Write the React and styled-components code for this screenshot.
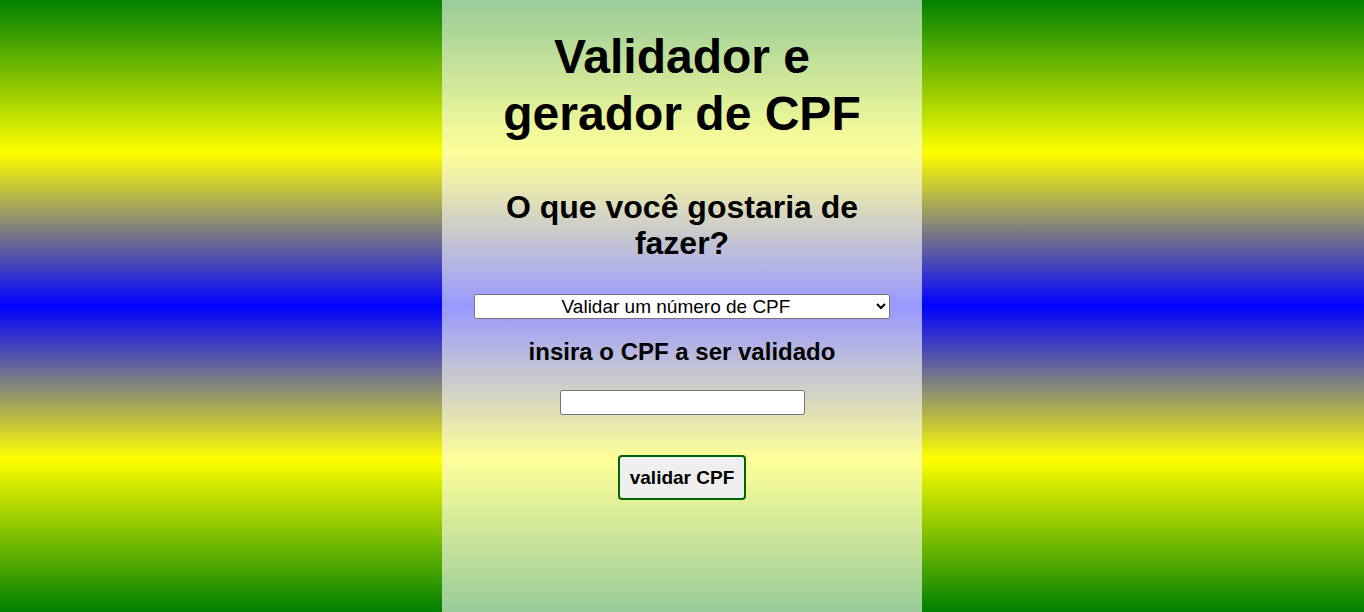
import React, { useState } from "react";
import styled, { createGlobalStyle } from "styled-components";

const GlobalStyle = createGlobalStyle`
  html, body {
    margin: 0;
    padding: 0;
  }
  body {
    font-family: "Liberation Sans", Arial, sans-serif;
  }
`;

const Page = styled.div`
  min-height: 100vh;
  background: linear-gradient(green, yellow, blue, yellow, green);
  display: flex;
  justify-content: center;
`;

const Panel = styled.main`
  width: 480px;
  min-height: 100vh;
  box-sizing: border-box;
  padding: 0 30px;
  background-color: rgba(255, 255, 255, 0.6);
  display: flex;
  flex-direction: column;
  align-items: center;
  text-align: center;
`;

const Title = styled.h1`
  font-size: 48px;
  line-height: 57px;
  font-weight: bold;
  margin: 28px 0 0;
  width: 380px;
`;

const Question = styled.h2`
  font-size: 32px;
  line-height: 36px;
  font-weight: bold;
  margin: 47px 0 0;
`;

const Select = styled.select`
  width: 416px;
  height: 25px;
  margin-top: 33px;
  font-family: "Liberation Sans", Arial, sans-serif;
  font-size: 19px;
  text-align: center;
  text-align-last: center;
  background: white;
  border: 1px solid #767676;
  border-radius: 2px;
`;

const Label = styled.h3`
  font-size: 24px;
  line-height: 28px;
  font-weight: bold;
  margin: 19px 0 0;
`;

const Input = styled.input`
  width: 245px;
  height: 25px;
  box-sizing: border-box;
  margin-top: 24px;
  border: 1px solid #767676;
  border-radius: 2px;
  background: white;
`;

const Button = styled.button`
  margin-top: 40px;
  padding: 0 10px;
  height: 45px;
  font-family: "Liberation Sans", Arial, sans-serif;
  font-size: 19px;
  font-weight: bold;
  color: black;
  background-color: #efefef;
  border: 2px solid darkgreen;
  border-radius: 4px;
  cursor: pointer;
`;

export default function App() {
  const [mode, setMode] = useState("validar");
  const [cpf, setCpf] = useState("");

  return (
    <>
      <GlobalStyle />
      <Page>
        <Panel>
          <Title>Validador e gerador de CPF</Title>
          <Question>O que você gostaria de fazer?</Question>
          <Select value={mode} onChange={e => setMode(e.target.value)}>
            <option value="validar">Validar um número de CPF</option>
            <option value="gerar">Gerar um número de CPF</option>
          </Select>
          <Label>insira o CPF a ser validado</Label>
          <Input
            type="text"
            value={cpf}
            onChange={e => setCpf(e.target.value)}
          />
          <Button>validar CPF</Button>
        </Panel>
      </Page>
    </>
  );
}
